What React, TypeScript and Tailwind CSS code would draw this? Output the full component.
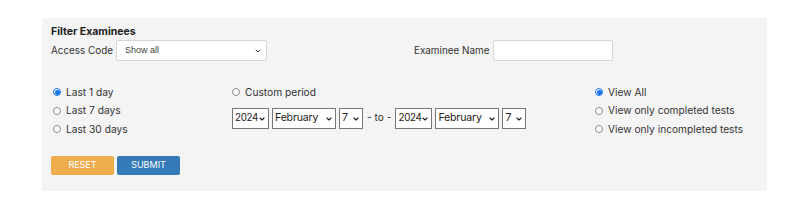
import { ChevronDown } from "lucide-react";

const font = { fontFamily: "Inter, 'Noto Sans', sans-serif" };

function Radio({ label, checked = false }: { label: string; checked?: boolean }) {
  return (
    <label className="flex h-[18.5px] items-center gap-[4px] text-[10.2px] text-[#333]">
      <span
        className={
          checked
            ? "flex h-[8px] w-[8px] items-center justify-center rounded-full border border-[#1a73e8] bg-white"
            : "h-[8px] w-[8px] rounded-full border border-[#8a8a8a] bg-white"
        }
      >
        {checked ? <span className="h-[5px] w-[5px] rounded-full bg-[#1a73e8]" /> : null}
      </span>
      <span className="ml-[1px]">{label}</span>
    </label>
  );
}

function DateSelect({ value, width, tight = false }: { value: string; width: string; tight?: boolean }) {
  return (
    <div
      className={`relative flex h-[21px] items-center border border-[#767676] bg-white pl-[2px] text-[#222] ${
        tight ? "text-[9.8px] tracking-[-0.3px]" : "text-[10.6px] tracking-[-0.2px]"
      } ${width}`}
    >
      <span>{value}</span>
      <ChevronDown className="absolute right-[2px] top-[6.5px] h-[8px] w-[8px]" strokeWidth={3.5} />
    </div>
  );
}

export default function App() {
  return (
    <div className="bg-white pl-[42px] pt-[18px]" style={font}>
      <div className="h-[173px] w-[725px] bg-[#f4f4f4] px-[9px] pt-[7px] text-[#333]">
        <div className="h-[14px] text-[10.5px] font-bold leading-[14px] text-[#222]">Filter Examinees</div>
        <div className="mt-[1px] flex h-[21px] items-center">
          <span className="text-[9.9px]">Access Code</span>
          <div
            className="relative ml-[3px] flex h-[21px] w-[151px] items-center rounded-[2px] border border-[#d6d6d6] bg-white pl-[8px] text-[9px] text-[#444]"
            style={{ fontFamily: "'Liberation Sans', Arial, sans-serif" }}
          >
            Show all
            <ChevronDown className="absolute right-[4px] top-[6px] h-[8px] w-[8px]" strokeWidth={3} />
          </div>
          <span className="ml-[147px] text-[9.9px]">Examinee Name</span>
          <div className="ml-[4px] h-[21px] w-[120px] rounded-[2px] border border-[#d6d6d6] bg-white" />
        </div>

        <div className="mt-[22px] flex">
          <div className="w-[181px] pl-[2px]">
            <Radio label="Last 1 day" checked />
            <Radio label="Last 7 days" />
            <Radio label="Last 30 days" />
          </div>
          <div className="w-[363px]">
            <Radio label="Custom period" />
            <div className="flex items-center gap-[3px] pt-[6px]">
              <DateSelect value="2024" width="w-[37px]" tight />
              <DateSelect value="February" width="w-[64px]" />
              <DateSelect value="7" width="w-[24px]" />
              <span className="px-[1px] text-[10.2px]">- to -</span>
              <DateSelect value="2024" width="w-[37px]" tight />
              <DateSelect value="February" width="w-[64px]" />
              <DateSelect value="7" width="w-[24px]" />
            </div>
          </div>
          <div>
            <Radio label="View All" checked />
            <Radio label="View only completed tests" />
            <Radio label="View only incompleted tests" />
          </div>
        </div>

        <div className="mt-[17px] flex gap-[3px]">
          <button className="h-[19px] w-[63px] rounded-[2px] bg-[#f0ad4e] text-[9px] text-white">RESET</button>
          <button className="h-[19px] w-[63px] rounded-[2px] bg-[#337ab7] text-[9px] text-white">SUBMIT</button>
        </div>
      </div>
    </div>
  );
}
